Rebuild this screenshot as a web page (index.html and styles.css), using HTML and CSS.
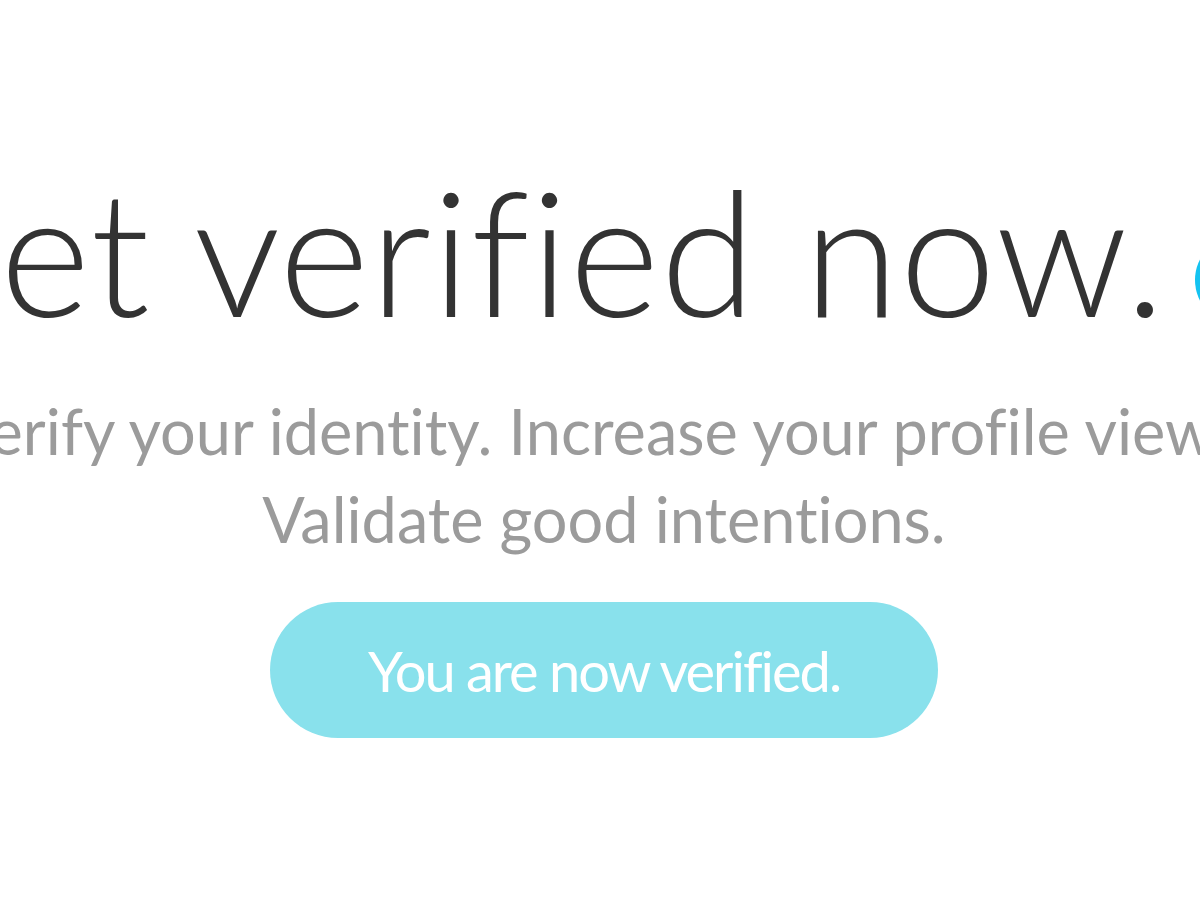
FILE: index.html
```html
<!DOCTYPE html>
<html lang="en">
<head>
<meta charset="utf-8">
<title>Get verified now.</title>
<link rel="stylesheet" href="styles.css">
</head>
<body>
<main class="hero">
  <div class="headline">
    <h1 class="title">Get verified now.</h1>
    <svg class="check" viewBox="0 0 90 90" width="90" height="90" aria-hidden="true">
      <circle cx="45" cy="45" r="45" fill="#14c3f1"/>
      <path d="M25 46 L39 60 L66 32" fill="none" stroke="#fff" stroke-width="7" stroke-linecap="round" stroke-linejoin="round"/>
    </svg>
  </div>
  <p class="subtitle">Verify your identity. Increase your profile views.<br>Validate good intentions.</p>
  <button class="verified-btn" type="button">You are now verified.</button>
</main>
</body>
</html>
```

FILE: styles.css
```css
html, body {
  margin: 0;
  padding: 0;
  background: #ffffff;
  overflow: hidden;
}

body {
  width: 1200px;
  height: 900px;
  font-family: Lato, "Open Sans", sans-serif;
  font-variant-ligatures: none;
  font-feature-settings: "liga" 0, "clig" 0;
}

.hero {
  display: flex;
  flex-direction: column;
  align-items: center;
  padding-top: 164px;
  padding-left: 8px;
}

.headline {
  display: flex;
  align-items: center;
  justify-content: center;
  gap: 29px;
  width: 1200px;
  margin-left: -50px;
  white-space: nowrap;
}

.title {
  margin: 0;
  font-family: Lato, sans-serif;
  font-weight: 300;
  font-size: 173px;
  line-height: 173px;
  letter-spacing: 0.6px;
  color: #333333;
  flex: none;
}

.check {
  flex: none;
  margin-top: 59px;
}

.subtitle {
  margin: 50px 0 0;
  font-family: Lato, sans-serif;
  font-weight: 400;
  font-size: 63px;
  line-height: 88px;
  color: #9b9b9b;
  text-align: center;
  white-space: nowrap;
}

.verified-btn {
  margin-top: 39px;
  width: 668px;
  height: 136px;
  border: none;
  border-radius: 68px;
  background: #89e1ec;
  color: #ffffff;
  font-family: Lato, sans-serif;
  font-weight: 400;
  font-size: 56px;
  letter-spacing: -2px;
  padding: 0;
  cursor: default;
  font-variant-ligatures: none;
}
```
